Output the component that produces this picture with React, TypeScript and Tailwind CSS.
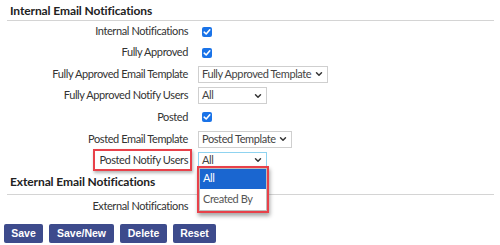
import { ChevronDown } from "lucide-react";

function Check() {
  return (
    <span className="ml-[4px] flex h-[10px] w-[10px] items-center justify-center rounded-[2px] bg-[#1a73e8]">
      <svg width="8" height="8" viewBox="0 0 8 8">
        <path d="M1.2 4.2 L3.2 6 L6.8 1.8" fill="none" stroke="white" strokeWidth="1.6" strokeLinecap="round" strokeLinejoin="round" />
      </svg>
    </span>
  );
}

function Select({ value, w, focus }: { value: string; w: string; focus?: boolean }) {
  return (
    <div
      className={`flex h-[17px] items-center justify-between whitespace-nowrap border bg-white pl-[3px] pr-[3px] text-[#444] ${w} ${
        focus ? "border-[#8fd3f0]" : "border-[#cfcfcf]"
      }`}
    >
      <span>{value}</span>
      <ChevronDown size={10} strokeWidth={3.5} className="shrink-0 text-[#333]" />
    </div>
  );
}

const rows: { label: string; h: string; control: React.ReactNode; mark?: boolean }[] = [
  { label: "Internal Notifications", h: "h-[21px]", control: <Check /> },
  { label: "Fully Approved", h: "h-[21px]", control: <Check /> },
  { label: "Fully Approved Email Template", h: "h-[22px]", control: <Select value="Fully Approved Template" w="w-[130px]" /> },
  { label: "Fully Approved Notify Users", h: "h-[21px]", control: <Select value="All" w="w-[69px]" /> },
  { label: "Posted", h: "h-[22px]", control: <Check /> },
  { label: "Posted Email Template", h: "h-[22px]", control: <Select value="Posted Template" w="w-[94px]" /> },
  { label: "Posted Notify Users", h: "h-[20px]", control: <Select value="All" w="w-[69px]" focus />, mark: true },
];

export default function App() {
  return (
    <main className="h-[245px] w-[500px] overflow-hidden bg-white pl-[7px] pr-[6px] font-['Lato',sans-serif] text-[11px] tracking-[-0.4px] text-[#333]">
      <h2 className="flex h-[21px] items-center border-b border-[#d4d4d4] pl-[3px] pt-[2px] text-[12px] font-bold tracking-[-0.1px] text-[#222]">
        Internal Email Notifications
      </h2>

      <div className="flex flex-col">
        {rows.map((r) => (
          <div key={r.label} className={`flex items-center whitespace-nowrap ${r.h}`}>
            <div className="w-[191px] shrink-0 pr-[10px] text-right">
              <span className="relative">
                {r.mark && (
                  <span className="absolute -bottom-[5px] -left-[6px] -right-[4px] -top-[4px] border-2 border-[#e8414a] shadow-[1px_2px_3px_rgba(0,0,0,0.3)]" />
                )}
                <span className="relative">{r.label}</span>
              </span>
            </div>
            <div className="relative flex items-center">
              {r.control}
              {r.mark && (
                <div className="absolute left-[-1px] top-[14px] z-10 w-[72px] border-2 border-[#e8414a] bg-white shadow-[1px_3px_4px_rgba(0,0,0,0.35)]">
                  <div className="border border-[#bdbdbd]">
                    <div className="flex h-[20px] items-center bg-[#1a66d0] pl-[3px] text-white">All</div>
                    <div className="flex h-[21px] items-center pl-[3px] text-[#555]">Created By</div>
                  </div>
                </div>
              )}
            </div>
          </div>
        ))}
      </div>

      <h2 className="flex h-[25px] items-end border-b border-[#d4d4d4] pb-[3px] pl-[3px] text-[12px] font-bold tracking-[-0.1px] text-[#222]">
        External Email Notifications
      </h2>
      <div className="flex h-[22px] items-center">
        <div className="w-[191px] shrink-0 pr-[10px] text-right">External Notifications</div>
      </div>

      <div className="-ml-[3px] mt-[7px] flex gap-[6px] font-['Liberation_Sans',sans-serif] text-[10.5px] font-bold tracking-normal text-white">
        <button className="h-[19px] w-[39px] rounded-[2px] bg-[#3d4b8c]">Save</button>
        <button className="h-[19px] w-[65px] rounded-[2px] bg-[#3d4b8c]">Save/New</button>
        <button className="h-[19px] w-[47px] rounded-[2px] bg-[#3d4b8c]">Delete</button>
        <button className="h-[19px] w-[43px] rounded-[2px] bg-[#3d4b8c]">Reset</button>
      </div>
    </main>
  );
}
